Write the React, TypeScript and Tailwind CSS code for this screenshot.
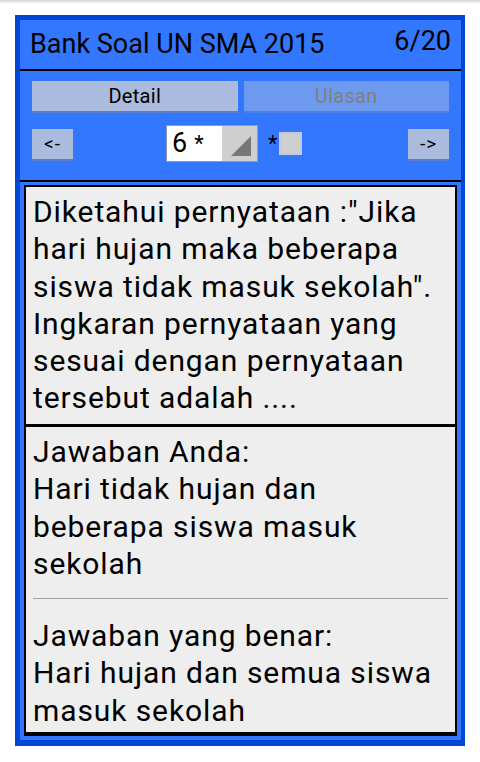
import React from "react";

const font = { fontFamily: "Roboto, 'Noto Sans', sans-serif" };

function SmallButton({ label }: { label: string }) {
  return (
    <div className="w-[41px] h-[30px] bg-[#aabbdd] shadow-[0_2px_0_#5a7fcf] flex items-center justify-center text-[19px] tracking-[1px] leading-none text-black">
      {label}
    </div>
  );
}

function Spinner() {
  return (
    <div className="flex h-[37px] w-[92px] border border-[#8f9bb3] bg-white">
      <div className="flex-1 flex items-center pl-[5px] text-[27px] leading-none text-black">
        6 <span className="ml-[7px] text-[22px]">*</span>
      </div>
      <div className="w-[35px] h-full bg-[#cfcfcf] relative">
        <svg className="absolute inset-0" width="35" height="35" viewBox="0 0 35 35">
          <polygon points="9,30 29,30 29,10" fill="#777777" />
        </svg>
      </div>
    </div>
  );
}

export default function App() {
  return (
    <div className="w-[480px] h-[762px] bg-white overflow-hidden" style={font}>
      <div className="h-[4px] bg-gradient-to-b from-[#d6d6d6] to-white" />
      <div className="ml-[15px] mt-[11px] w-[450px] h-[731px] bg-[#0047d6] pl-[5px] pr-[4px] pt-[5px] pb-[6px]">
        <div className="h-full bg-[#3377ff] flex flex-col">
          <header className="h-[51px] border-b-2 border-black flex justify-between items-start px-[10px]">
            <span className="mt-[8px] text-[27px] leading-[32px] text-black">Bank Soal UN SMA 2015</span>
            <span className="mt-[5px] text-[27px] leading-[32px] text-black">6/20</span>
          </header>

          <div className="h-[111px] border-b-2 border-black px-[12px] pt-[10px]">
            <div className="flex gap-[6px]">
              <div className="flex-1 h-[30px] bg-[#aabbdd] shadow-[0_2px_0_#5a7fcf] flex items-center justify-center text-[20px] tracking-[0.3px] text-black">
                Detail
              </div>
              <div className="flex-1 h-[30px] bg-[#6d9aee] shadow-[0_2px_0_#4a7fe6] flex items-center justify-center text-[20px] tracking-[0.3px] text-[#808080]">
                Ulasan
              </div>
            </div>
            <div className="mt-[14px] flex items-center">
              <SmallButton label="<-" />
              <div className="flex items-center ml-[93px]">
                <Spinner />
                <span className="ml-[10px] text-[22px] leading-none text-black">*</span>
                <div className="ml-[2px] w-[23px] h-[23px] bg-[#cfcfcf] border-2 border-[#c4cbe0]" />
              </div>
              <div className="flex-1" />
              <SmallButton label="->" />
            </div>
          </div>

          <div className="flex-1 mx-[4px] mt-[3px] mb-[4px] bg-[#eeeeee] border-2 border-b-4 border-black flex flex-col text-[30px] tracking-[0.9px] leading-[37.3px] text-black overflow-hidden">
            <div className="h-[240px] shrink-0 px-[7px] pt-[6px] border-b-[3px] border-black">
              Diketahui pernyataan :"Jika hari hujan maka beberapa siswa tidak masuk sekolah". Ingkaran pernyataan yang sesuai dengan pernyataan tersebut adalah ....
            </div>
            <div className="px-[7px] pt-[6px]">
              <p>Jawaban Anda:</p>
              <p>Hari tidak hujan dan beberapa siswa masuk sekolah</p>
              <hr className="mt-[16px] mb-[18px] border-0 border-t border-[#a0a0a0]" />
              <p>Jawaban yang benar:</p>
              <p>Hari hujan dan semua siswa masuk sekolah</p>
            </div>
          </div>
        </div>
      </div>
    </div>
  );
}
